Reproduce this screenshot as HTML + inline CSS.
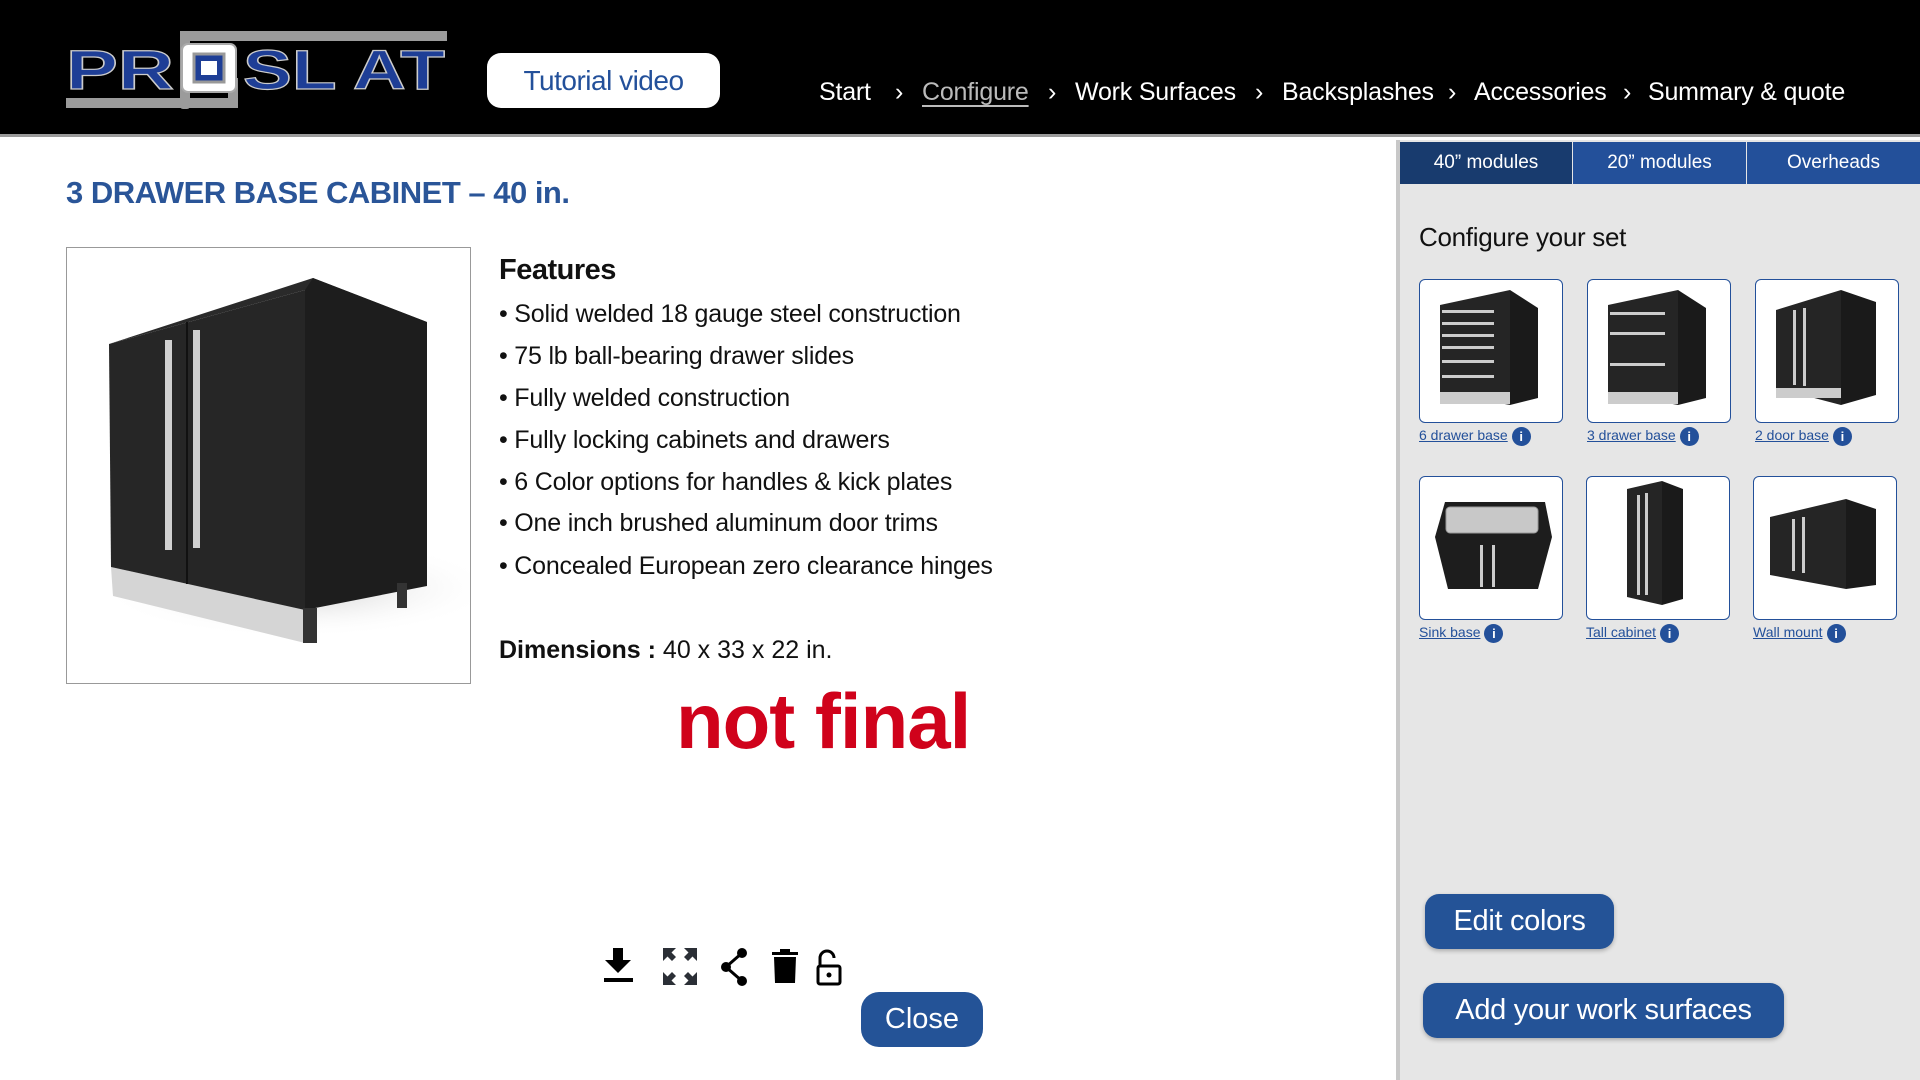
<!DOCTYPE html>
<html><head><meta charset="utf-8"><style>
*{margin:0;padding:0;box-sizing:border-box}
body{width:1920px;height:1080px;overflow:hidden;background:#fff;font-family:"Liberation Sans",Arial,sans-serif;position:relative}
.abs{position:absolute}
#hdr{left:0;top:0;width:1920px;height:137px;background:#000;border-bottom:3px solid #9a9a9a}
.nav{top:78px;font-size:25px;color:#fff;white-space:nowrap;letter-spacing:-0.2px}
.chev{top:78px;color:#fff;font-size:25px}
#tut{left:487px;top:53px;width:233px;height:55px;background:#fff;border-radius:14px;color:#23509a;font-size:28px;text-align:center;line-height:55px;letter-spacing:-0.5px}
#title{left:66px;top:175px;font-size:31px;color:#2a5598;font-weight:bold;letter-spacing:-0.5px}
#imgbox{left:66px;top:247px;width:405px;height:437px;border:1px solid #999;background:#fff}
#feat{left:499px;top:254px;font-size:29px;font-weight:bold;color:#111;letter-spacing:-0.5px}
.li{left:499px;font-size:25px;color:#111;white-space:nowrap;letter-spacing:-0.2px}
#dim{left:499px;top:636px;font-size:25px;color:#111}
#nf{left:676px;top:676px;font-size:78px;font-weight:bold;color:#d0021b;letter-spacing:-1px}
#close{left:861px;top:992px;width:122px;height:55px;background:#245397;border-radius:18px;color:#fff;font-size:29px;text-align:center;line-height:55px}
#right{left:1396px;top:140px;width:524px;height:940px;background:#e6e6e6;border-left:4px solid #c8c8c8}
.tab{top:142px;height:42px;color:#fff;font-size:19px;text-align:center;line-height:42px;background:#23509a}
#cfg{left:1419px;top:222px;font-size:26px;color:#111;letter-spacing:-0.3px}
.th{width:144px;height:144px;background:#fff;border:1.5px solid #23509a;border-radius:6px;overflow:hidden}
.lbl{font-size:14px;color:#23509a;text-decoration:underline;white-space:nowrap}
.inf{display:inline-block;width:19px;height:19px;border-radius:50%;background:#23509a;color:#fff;font-size:13px;font-weight:bold;text-align:center;line-height:19px;vertical-align:middle;margin-left:4px;text-decoration:none}
.btn{background:#245397;color:#fff;border-radius:14px;text-align:center;font-size:29px;box-shadow:0 2px 4px rgba(0,0,0,.25);letter-spacing:-0.3px}
</style></head><body>
<div id="hdr" class="abs"></div>
<svg class="abs" style="left:60px;top:28px" width="395" height="85" viewBox="0 0 395 85">
<rect x="120" y="3" width="267" height="10" fill="#9b9b9b"/>
<rect x="120" y="3" width="10" height="78" rx="3" fill="#9b9b9b"/>
<rect x="6" y="70" width="172" height="10" fill="#9b9b9b"/>
<rect x="168" y="50" width="10" height="30" fill="#9b9b9b"/>
<text x="6" y="61" font-family="Liberation Sans" font-weight="bold" font-size="56" fill="#1e3e96" stroke="#ccc" stroke-width="1.2" textLength="108" lengthAdjust="spacingAndGlyphs">PR</text>
<rect x="122" y="16" width="54" height="48" rx="6" fill="#fff" stroke="#aaa" stroke-width="2"/>
<rect x="134" y="26" width="30" height="28" fill="#1e3e96" stroke="#999" stroke-width="3"/>
<rect x="141" y="33" width="16" height="14" fill="#fff"/>
<text x="183" y="61" font-family="Liberation Sans" font-weight="bold" font-size="56" fill="#1e3e96" stroke="#ccc" stroke-width="1.2" textLength="202" lengthAdjust="spacingAndGlyphs">SL AT</text>
</svg>
<div id="tut" class="abs">Tutorial video</div>
<div class="abs nav" style="left:819px">Start</div>
<div class="abs chev" style="left:895px">&#8250;</div>
<div class="abs nav" style="left:922px;color:#bbb;text-decoration:underline;text-underline-offset:5px">Configure</div>
<div class="abs chev" style="left:1048px">&#8250;</div>
<div class="abs nav" style="left:1075px">Work Surfaces</div>
<div class="abs chev" style="left:1255px">&#8250;</div>
<div class="abs nav" style="left:1282px">Backsplashes</div>
<div class="abs chev" style="left:1448px">&#8250;</div>
<div class="abs nav" style="left:1474px">Accessories</div>
<div class="abs chev" style="left:1623px">&#8250;</div>
<div class="abs nav" style="left:1648px">Summary &amp; quote</div>

<div id="title" class="abs">3 DRAWER BASE CABINET – 40 in.</div>
<div id="imgbox" class="abs">
<svg width="403" height="435" viewBox="0 0 403 435">
<defs><radialGradient id="sh" cx="50%" cy="50%" r="50%"><stop offset="0" stop-color="#ccc"/><stop offset="1" stop-color="#fff" stop-opacity="0"/></radialGradient></defs>
<ellipse cx="230" cy="340" rx="200" ry="50" fill="url(#sh)"/>
<polygon points="44,319 238,362 238,395 46,348" fill="#d5d5d5"/>
<polygon points="42,96 246,30 360,74 238,42" fill="#2a2a2a"/>
<polygon points="42,96 238,42 238,362 44,319" fill="#262626"/>
<polygon points="238,42 246,30 360,74 360,338 238,362" fill="#1d1d1d"/>
<line x1="120" y1="74" x2="120" y2="336" stroke="#111" stroke-width="2"/>
<rect x="98" y="92" width="7" height="210" fill="#d0d0d0"/>
<rect x="126" y="82" width="7" height="218" fill="#d0d0d0"/>
<rect x="236" y="360" width="14" height="35" fill="#333"/>
<rect x="330" y="335" width="10" height="25" fill="#333"/>
</svg></div>
<div id="feat" class="abs">Features</div>
<div class="abs li" style="top:300px">• Solid welded 18 gauge steel construction</div>
<div class="abs li" style="top:342px">• 75 lb ball-bearing drawer slides</div>
<div class="abs li" style="top:384px">• Fully welded construction</div>
<div class="abs li" style="top:426px">• Fully locking cabinets and drawers</div>
<div class="abs li" style="top:468px">• 6 Color options for handles &amp; kick plates</div>
<div class="abs li" style="top:509px">• One inch brushed aluminum door trims</div>
<div class="abs li" style="top:552px">• Concealed European zero clearance hinges</div>
<div id="dim" class="abs"><b>Dimensions :</b> 40 x 33 x 22 in.</div>
<div id="nf" class="abs">not final</div>

<svg class="abs" style="left:600px;top:946px" width="250" height="42" viewBox="0 0 250 42">
<path d="M13 2h10v12h8L18 27 5 14h8z" fill="#000"/><rect x="4" y="32" width="29" height="4" fill="#000"/>
<g fill="#2b2f36"><path d="M84 2h13v13l-4.5-4.5-4.5 4.5-4-4 4.5-4.5z"/><path d="M63 2h13l-4.5 4.5 4.5 4.5-4 4-4.5-4.5-4.5 4.5z"/><path d="M63 39V26l4.5 4.5 4.5-4.5 4 4-4.5 4.5 4.5 4.5z"/><path d="M97 39H84l4.5-4.5-4.5-4.5 4-4 4.5 4.5 4.5-4.5z"/></g>
<g fill="#000"><circle cx="142" cy="7" r="5"/><circle cx="126" cy="21" r="5"/><circle cx="142" cy="35" r="5"/></g>
<path d="M142 7L126 21 142 35" stroke="#000" stroke-width="3" fill="none"/>
<rect x="172" y="6" width="26" height="3" fill="#000"/><rect x="180" y="3" width="10" height="4" fill="#000"/><path d="M174 11h22l-1 26h-20z" fill="#000"/>
<path d="M220 19v-7a7 7 0 0 1 14 0" stroke="#000" stroke-width="3" fill="none"/>
<rect x="218" y="20" width="22" height="18" rx="2" stroke="#000" stroke-width="3" fill="none"/><circle cx="229" cy="29" r="2.5" fill="#000"/>
</svg>
<div id="close" class="abs">Close</div>

<div id="right" class="abs"></div>
<div class="abs tab" style="left:1400px;width:172px;background:#183b6e">40” modules</div>
<div class="abs tab" style="left:1573px;width:173px">20” modules</div>
<div class="abs tab" style="left:1747px;width:173px">Overheads</div>
<div id="cfg" class="abs">Configure your set</div>

<div class="abs th" style="left:1419px;top:279px"><svg width="144" height="144"><polygon points="20,25 90,10 90,125 20,112" fill="#252525"/><polygon points="90,10 118,28 118,118 90,125" fill="#1a1a1a"/><g fill="#ccc"><rect x="22" y="30" width="52" height="3"/><rect x="22" y="42" width="52" height="3"/><rect x="22" y="54" width="52" height="3"/><rect x="22" y="66" width="52" height="3"/><rect x="22" y="80" width="52" height="3"/><rect x="22" y="95" width="52" height="3"/><rect x="20" y="112" width="70" height="12"/></g></svg></div>
<div class="abs th" style="left:1587px;top:279px"><svg width="144" height="144"><polygon points="20,25 90,10 90,125 20,112" fill="#252525"/><polygon points="90,10 118,28 118,118 90,125" fill="#1a1a1a"/><g fill="#ccc"><rect x="22" y="32" width="55" height="3"/><rect x="22" y="52" width="55" height="3"/><rect x="22" y="83" width="55" height="3"/><rect x="20" y="112" width="70" height="12"/></g></svg></div>
<div class="abs th" style="left:1755px;top:279px"><svg width="144" height="144"><polygon points="20,30 85,10 85,125 20,108" fill="#252525"/><polygon points="85,10 120,22 120,115 85,125" fill="#1a1a1a"/><g fill="#ccc"><rect x="37" y="30" width="3" height="75"/><rect x="47" y="28" width="3" height="78"/><rect x="20" y="108" width="65" height="10"/></g></svg></div>
<div class="abs lbl" style="left:1419px;top:427px">6 drawer base<span class="inf">i</span></div>
<div class="abs lbl" style="left:1587px;top:427px">3 drawer base<span class="inf">i</span></div>
<div class="abs lbl" style="left:1755px;top:427px">2 door base<span class="inf">i</span></div>

<div class="abs th" style="left:1419px;top:476px"><svg width="144" height="144"><polygon points="15,60 25,25 125,25 132,60 118,112 28,112" fill="#1d1d1d"/><rect x="26" y="30" width="92" height="26" rx="4" fill="#c8c8c8" stroke="#999"/><rect x="60" y="68" width="3" height="42" fill="#ccc"/><rect x="72" y="68" width="3" height="42" fill="#ccc"/></svg></div>
<div class="abs th" style="left:1586px;top:476px"><svg width="144" height="144"><polygon points="40,12 75,4 75,128 40,120" fill="#252525"/><polygon points="75,4 96,12 96,122 75,128" fill="#1a1a1a"/><rect x="50" y="18" width="3" height="100" fill="#ccc"/><rect x="58" y="16" width="3" height="102" fill="#ccc"/></svg></div>
<div class="abs th" style="left:1753px;top:476px"><svg width="144" height="144"><polygon points="16,40 92,22 92,112 16,98" fill="#252525"/><polygon points="92,22 122,32 122,108 92,112" fill="#1a1a1a"/><rect x="38" y="42" width="3" height="52" fill="#ccc"/><rect x="48" y="40" width="3" height="56" fill="#ccc"/></svg></div>
<div class="abs lbl" style="left:1419px;top:624px">Sink base<span class="inf">i</span></div>
<div class="abs lbl" style="left:1586px;top:624px">Tall cabinet<span class="inf">i</span></div>
<div class="abs lbl" style="left:1753px;top:624px">Wall mount<span class="inf">i</span></div>

<div class="abs btn" style="left:1425px;top:894px;width:189px;height:55px;line-height:55px">Edit colors</div>
<div class="abs btn" style="left:1423px;top:983px;width:361px;height:55px;line-height:55px">Add your work surfaces</div>
</body></html>
